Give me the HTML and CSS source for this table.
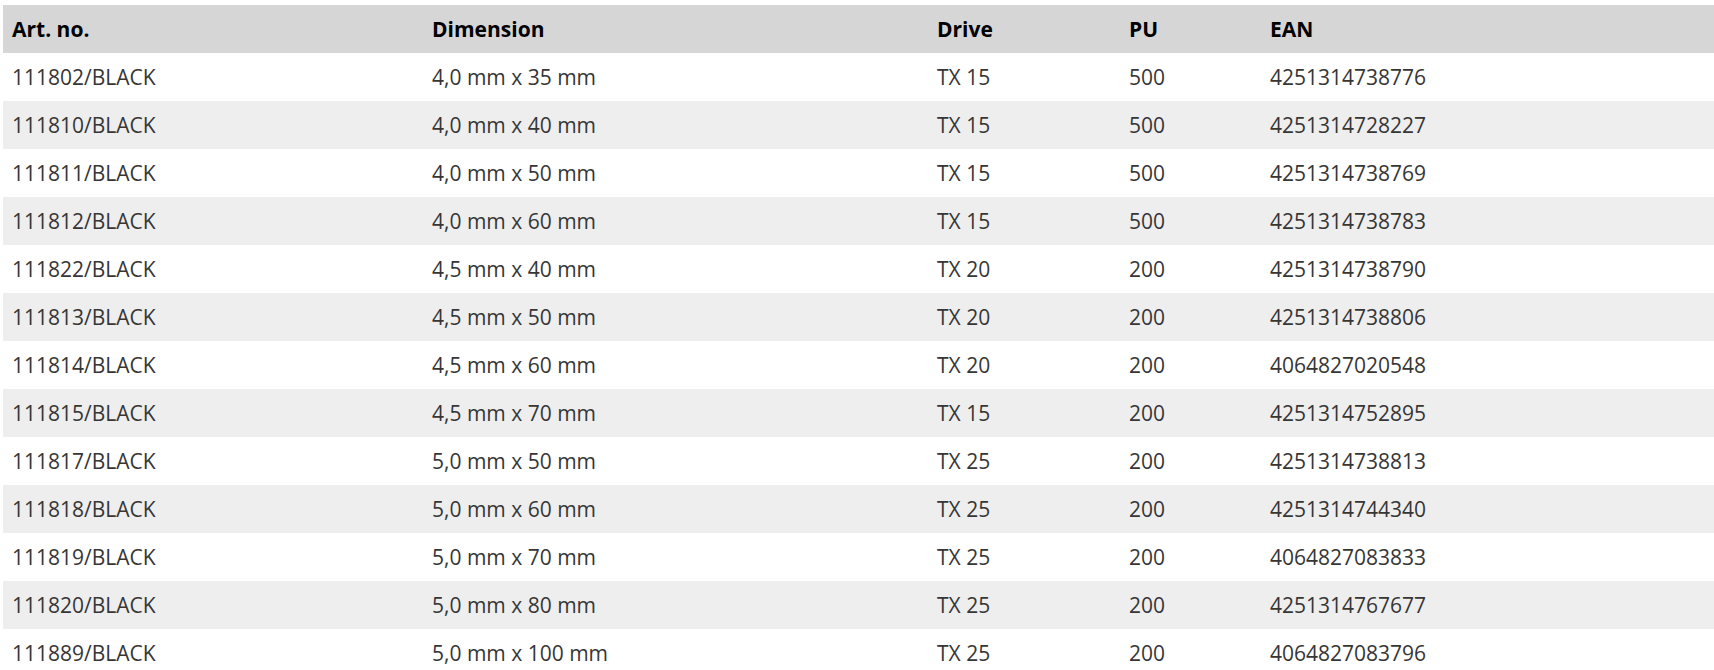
FILE: index.html
```html
<!DOCTYPE html>
<html>
<head>
<meta charset="utf-8">
<link rel="stylesheet" href="styles.css">
</head>
<body>
<table class="spec">
  <colgroup>
    <col class="c-art"><col class="c-dim"><col class="c-drive"><col class="c-pu"><col class="c-ean">
  </colgroup>
  <thead>
    <tr><th>Art. no.</th><th>Dimension</th><th>Drive</th><th>PU</th><th>EAN</th></tr>
  </thead>
  <tbody>
    <tr><td>111802/BLACK</td><td>4,0 mm x 35 mm</td><td>TX 15</td><td>500</td><td>4251314738776</td></tr>
    <tr><td>111810/BLACK</td><td>4,0 mm x 40 mm</td><td>TX 15</td><td>500</td><td>4251314728227</td></tr>
    <tr><td>111811/BLACK</td><td>4,0 mm x 50 mm</td><td>TX 15</td><td>500</td><td>4251314738769</td></tr>
    <tr><td>111812/BLACK</td><td>4,0 mm x 60 mm</td><td>TX 15</td><td>500</td><td>4251314738783</td></tr>
    <tr><td>111822/BLACK</td><td>4,5 mm x 40 mm</td><td>TX 20</td><td>200</td><td>4251314738790</td></tr>
    <tr><td>111813/BLACK</td><td>4,5 mm x 50 mm</td><td>TX 20</td><td>200</td><td>4251314738806</td></tr>
    <tr><td>111814/BLACK</td><td>4,5 mm x 60 mm</td><td>TX 20</td><td>200</td><td>4064827020548</td></tr>
    <tr><td>111815/BLACK</td><td>4,5 mm x 70 mm</td><td>TX 15</td><td>200</td><td>4251314752895</td></tr>
    <tr><td>111817/BLACK</td><td>5,0 mm x 50 mm</td><td>TX 25</td><td>200</td><td>4251314738813</td></tr>
    <tr><td>111818/BLACK</td><td>5,0 mm x 60 mm</td><td>TX 25</td><td>200</td><td>4251314744340</td></tr>
    <tr><td>111819/BLACK</td><td>5,0 mm x 70 mm</td><td>TX 25</td><td>200</td><td>4064827083833</td></tr>
    <tr><td>111820/BLACK</td><td>5,0 mm x 80 mm</td><td>TX 25</td><td>200</td><td>4251314767677</td></tr>
    <tr><td>111889/BLACK</td><td>5,0 mm x 100 mm</td><td>TX 25</td><td>200</td><td>4064827083796</td></tr>
  </tbody>
</table>
</body>
</html>
```
FILE: styles.css
```css
html, body {
  margin: 0;
  padding: 0;
  background: #ffffff;
}
body {
  font-family: "Open Sans", "Noto Sans", sans-serif;
  font-size: 21px;
  color: #363636;
}
.spec {
  margin: 5px 0 0 3px;
  width: 1711px;
  border-collapse: collapse;
  table-layout: fixed;
}
.c-art { width: 420px; }
.c-dim { width: 505px; }
.c-drive { width: 192px; }
.c-pu { width: 141px; }
.c-ean { width: auto; }
.spec th, .spec td {
  height: 48px;
  padding: 0 0 0 9px;
  text-align: left;
  vertical-align: middle;
  white-space: nowrap;
}
.spec th {
  background: #d6d6d6;
  color: #000000;
  font-weight: 700;
}
.spec tbody tr:nth-child(even) td {
  background: #eeeeee;
}
```
